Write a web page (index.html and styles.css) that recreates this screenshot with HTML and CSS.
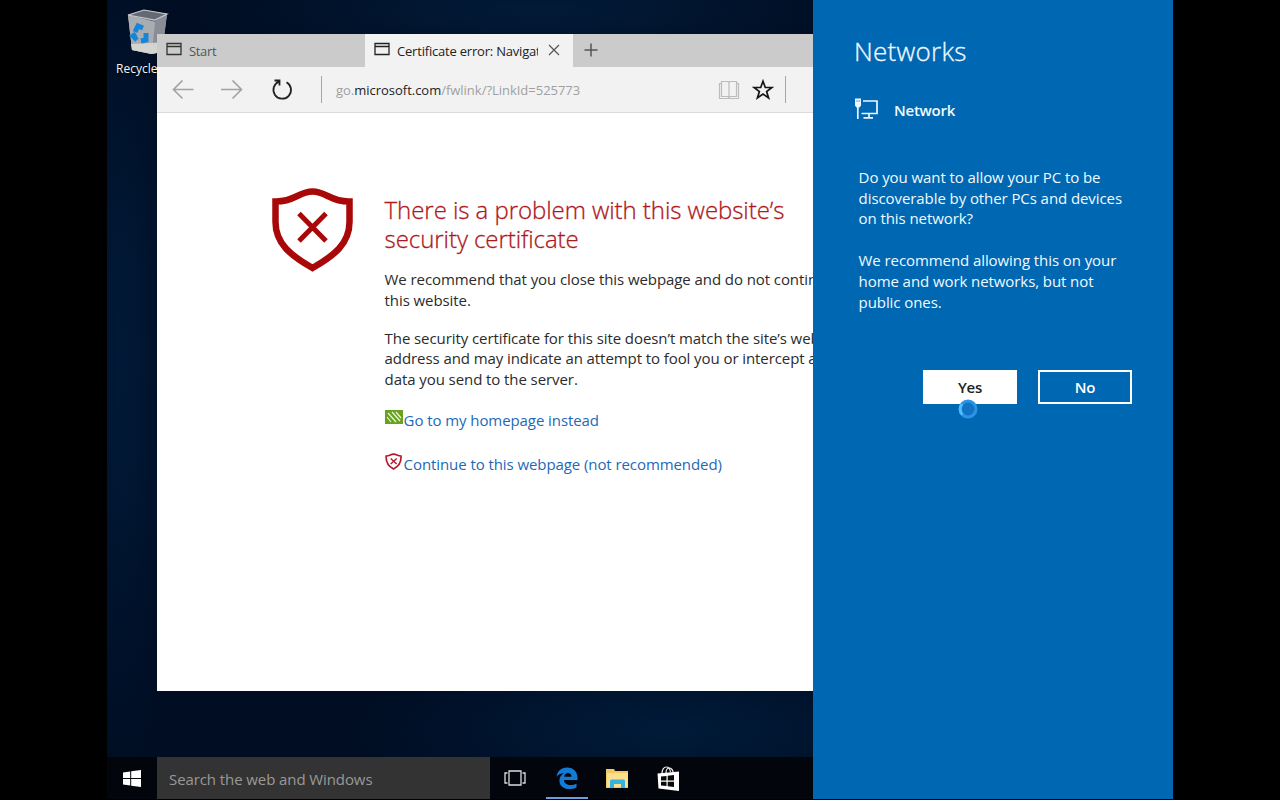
FILE: index.html
```html
<!DOCTYPE html>
<html lang="en">
<head>
<meta charset="utf-8">
<title>Desktop</title>
<link rel="stylesheet" href="styles.css">
</head>
<body>
<div class="desktop">
  <div class="recycle">
    <svg width="42" height="46" viewBox="0 0 42 46">
      <path d="M1 6 17 1 40 5 35 43 24 45 5 41z" fill="#a9adb3"/>
      <path d="M1 6 17 1 40 5 28 13z" fill="#646a73"/>
      <path d="M1 6 28 13 25 45 5 41z" fill="#a9acb1"/>
      <path d="M28 13 40 5 35 43 25 45z" fill="#898e96"/>
      <path d="M4 35 25 34 36 33 34 43 25 45 5 41z" fill="#d4d4d1"/>
      <path d="M1 6 17 1 40 5 28 11z" fill="none" stroke="#c5c9ce" stroke-width="1.2"/>
      <path d="M8 23 11 17 16 19M19 24 19 31 14 32M10 31 6 27 9 25" fill="none" stroke="#1685d8" stroke-width="5"/>
    </svg>
    <span class="recycle-label">Recycle Bin</span>
  </div>

  <main class="window">
    <div class="tabs">
      <div class="tab tab-start">
        <svg class="tab-icon" width="16" height="14" viewBox="0 0 16 14"><path d="M1 1.500h14v11H1zM1 4.500h14" fill="none" stroke="#333" stroke-width="1.300"/></svg>
        <span class="start-title">Start</span>
      </div>
      <div class="tab tab-active">
        <svg class="tab-icon" width="16" height="14" viewBox="0 0 16 14"><path d="M1 1.500h14v11H1zM1 4.500h14" fill="none" stroke="#222" stroke-width="1.300"/></svg>
        <span class="tab-title">Certificate error: Navigation blocked</span>
        <svg class="close" width="12" height="12" viewBox="0 0 12 12"><path d="M1 1l10 10M11 1 1 11" stroke="#555" stroke-width="1.200"/></svg>
      </div>
      <svg class="plus" width="14" height="14" viewBox="0 0 14 14"><path d="M7 .5v13M.5 7h13" stroke="#555" stroke-width="1.500"/></svg>
    </div>
    <div class="toolbar">
      <svg class="nav-back" width="22" height="20" viewBox="0 0 22 20"><path d="M21.500 9.500H2M10.500 .500 1.500 9.500l9 9" fill="none" stroke="#a2a2a2" stroke-width="1.600"/></svg>
      <svg class="nav-next" width="22" height="20" viewBox="0 0 22 20"><path d="M0 9.500h20.500M11.500 .500l9 9-9 9" fill="none" stroke="#a2a2a2" stroke-width="1.600"/></svg>
      <svg class="nav-reload" width="22" height="22" viewBox="0 0 22 22"><path d="M8 2.700A8.800 8.800 0 1 0 15.500 3.200M3.500 1.500H8.500V6.500" fill="none" stroke="#222" stroke-width="1.800"/></svg>
      <i class="rule"></i>
      <span class="url">go.<b>microsoft.com</b>/fwlink/?LinkId=525773</span>
      <svg class="book" width="22" height="20" viewBox="0 0 22 20"><path d="M3.500 1.500H10L11 2.500 12 1.500H18.500V16.500H12L11 17.500 10 16.500H3.500zM11 2.500V17.500M3.500 3.500H1.500V18.500H20.500V3.500H18.500" fill="none" stroke="#bcbcbc" stroke-width="1.200"/></svg>
      <svg class="star" width="22" height="22" viewBox="0 0 22 22"><path d="M11 2.200 13.300 8.500H19.900L14.600 12.500 16.600 19 11 15.100 5.400 19 7.400 12.500 2.100 8.500H8.700z" fill="none" stroke="#151515" stroke-width="1.700"/></svg>
      <i class="rule"></i>
    </div>
    <div class="page">
      <svg class="shield" width="82" height="86" viewBox="0 0 82 86"><path d="M3.500 14.500C22 15 27 4.500 40.500 4.500S59 15 77.500 14.500V35C77.500 57 61.500 69 40.500 81 19.500 69 3.500 57 3.500 35z" fill="none" stroke="#a90808" stroke-width="6.500"/><path d="M27 26.500 54 54M54 26.500 27 54" stroke="#a90808" stroke-width="5"/></svg>
      <div class="message">
        <h1>There is a problem with this website’s<br>security certificate</h1>
        <p class="first">We recommend that you close this webpage and do not continue to<br>this website.</p>
        <p class="second">The security certificate for this site doesn’t match the site’s web<br>address and may indicate an attempt to fool you or intercept any<br>data you send to the server.</p>
        <a class="link home"><svg width="18" height="14" viewBox="0 0 18 14"><path d="M0 0h18v14H0z" fill="#67a220"/><path d="M3 3 11 12M7 2 15 11M11 2 16 8M2 7 6 12" stroke="#eef6dc" stroke-width="1.200"/></svg><span>Go to my homepage instead</span></a>
        <a class="link cont"><svg width="18" height="17" viewBox="0 0 18 17"><path d="M1.200 3C5 3 5.500 1.200 8.500 1.200S12.500 3 16 3C16.500 10 13.500 13.500 8.500 16 3.500 13.500.7 10 1.200 3z" fill="none" stroke="#b21b2b" stroke-width="1.700"/><path d="M5.700 5.500l6 5.500M11.700 5.500 5.700 11" stroke="#b21b2b" stroke-width="1.400"/></svg><span>Continue to this webpage (not recommended)</span></a>
      </div>
    </div>
  </main>

  <footer class="taskbar">
    <div class="start-button"><svg width="18" height="17" viewBox="0 0 18 17"><path d="M0 2.400 7.200 1.400V8H0zM8.200 1.200 18 0V8H8.200zM0 9H7.200V15.600L0 14.600zM8.200 9H18V17L8.200 15.800z" fill="#fff"/></svg></div>
    <div class="search"><span>Search the web and Windows</span></div>
    <div class="task view"><svg width="22" height="16" viewBox="0 0 22 16"><path d="M5 1h12v14H5zM3.500 3H1v10h2.500M18.500 3H21v10h-2.500" fill="none" stroke="#ddd" stroke-width="1.300"/></svg></div>
    <div class="task edge"><svg width="22" height="22" viewBox="0 0 22 22"><path d="M.5 9.800C1.300 4.300 5.100.5 11 .5c6.700 0 10.500 4.700 10.500 10.400v2.200H8c.2 3.300 3 5 6.500 5 2.300 0 4.200-.6 6-1.700v4c-2 1.100-4.300 1.600-7 1.600C7.500 22 3.400 18.800 3.400 13.700c0-3.400 1.800-6 4.700-7.500C4.500 6.300 2.100 7.600.5 9.800zM8.100 9.700h7.400c0-2.500-1.200-3.800-3.500-3.800-2.100 0-3.500 1.300-3.900 3.800z" fill="#137bd6"/></svg></div>
    <div class="task files"><svg width="23" height="20" viewBox="0 0 23 20"><path d="M0 0h8l1 2h13v17H0z" fill="#efc965"/><path d="M1 4h21v14H1z" fill="#fbdf8c"/><path d="M4 19v-7q0-1.500 1.500-1.500h12q1.500 0 1.500 1.500v7h-4v-4H8v4z" fill="#35b3df"/></svg></div>
    <div class="task store"><svg width="23" height="25" viewBox="0 0 23 25"><path d="M5 8C5 3 7 1 9.500 1S13 3 13.500 6M9 7C9 3 11 2 12.500 2S16 4 16 6" fill="none" stroke="#eee" stroke-width="1.200"/><path d="M.5 7.500 22 5.500V25L1.500 22.500z" fill="#fff"/><path d="M4 10.500 9.500 10V14.500H4zM10.700 9.800 17 9V14.500H10.700zM4 15.700H9.500V20L4 19.500zM10.700 15.700H17V21L10.700 20.200z" fill="#0a0a0a"/></svg></div>
  </footer>

  <aside class="panel">
    <h2>Networks</h2>
    <div class="network">
      <svg width="24" height="22" viewBox="0 0 24 22"><path d="M8 3H22V15.500H6.500M14 15.500v4M8.500 19.800H18M2.800 7V21" fill="none" stroke="#eef8ff" stroke-width="1.700"/><path d="M0 .5h6v7L4.500 9.500H1.500L0 7.500z" fill="#eef8ff"/><path d="M2 2v2M4.200 2v2" stroke="#4488b8" stroke-width=".8"/></svg>
      <strong>Network</strong>
    </div>
    <p class="ask">Do you want to allow your PC to be<br>discoverable by other PCs and devices<br>on this network?</p>
    <p class="advice">We recommend allowing this on your<br>home and work networks, but not<br>public ones.</p>
    <div class="buttons">
      <button class="yes">Yes<svg class="busy" width="20" height="20" viewBox="0 0 20 20"><circle cx="10" cy="10" r="8" fill="#1273c5" stroke="#2b94e6" stroke-width="3"/><path d="M4.300 15.500A8 8 0 0 1 4 5" fill="none" stroke="#52bbff" stroke-width="3"/></svg></button>
      <button class="no">No</button>
    </div>
  </aside>
</div>
</body>
</html>
```

FILE: styles.css
```css
* { box-sizing: border-box; }
body { margin: 0; height: 800px; background: #000; display: flex; justify-content: center; overflow: hidden; font-family: "Open Sans", "Noto Sans", sans-serif; }
svg { display: block; flex: none; }
h1, h2, p { margin: 0; font-weight: 400; }
.desktop { position: relative; width: 1066px; height: 799px; overflow: hidden; display: flex; flex-direction: column; justify-content: flex-end;
  background: radial-gradient(ellipse 330px 90px at 560px 730px, #001b39, transparent), radial-gradient(ellipse 60px 440px at 15px 360px, #011a38, transparent), radial-gradient(ellipse 350px 60px at 430px 10px, #021b38, transparent), #000d22; }
.recycle { position: absolute; left: 9px; top: 9px; width: 70px; display: flex; flex-direction: column; }
.recycle svg { margin-left: 11px; }
.recycle-label { color: #f4f4f4; font-size: 12px; line-height: 18px; margin-top: 5px; white-space: nowrap; text-shadow: 1px 1px 2px #000; }

.window { position: absolute; left: 50px; top: 34px; width: 706px; height: 657px; background: #fff; display: flex; flex-direction: column; }
.tabs { height: 33px; background: #cbcbcb; display: flex; align-items: center; flex: none; }
.tab { height: 33px; display: flex; align-items: center; padding-left: 9px; font-size: 13px; white-space: nowrap; }
.tab-start { width: 208px; color: #555; }
.tab-icon { margin-bottom: 3px; }
.start-title { margin: 1px 0 0 7px; letter-spacing: -.35px; }
.tab-active { width: 208px; background: #f2f2f2; color: #222; }
.tab-title { width: 141px; overflow: hidden; margin: 1px 0 0 7px; letter-spacing: -.2px; }
.close { margin: 0 0 2px 10px; }
.plus { margin: 0 0 2px 11px; }
.toolbar { height: 46px; flex: none; background: #f2f2f2; border-bottom: 1px solid #dcdcdc; display: flex; align-items: center; padding-left: 15px; }
.nav-next { margin-left: 27px; }
.nav-reload { margin-left: 28px; }
.rule { width: 1px; height: 27px; background: #a5a5a5; flex: none; }
.nav-reload + .rule { margin-left: 28px; }
.url { width: 382px; margin-left: 14px; color: #a0a0a0; font-size: 13px; letter-spacing: -.02px; }
.url b { font-weight: 400; color: #222; }
.star { margin-left: 12px; }
.star + .rule { margin-left: 11px; }
.page { display: flex; padding: 74px 0 0 115px; }
.message { margin-left: 30.6px; padding-top: 8px; white-space: nowrap; color: #2b2b2b; font-size: 15px; line-height: 20.8px; letter-spacing: -.08px; }
h1 { color: #ad1821; font-weight: 300; font-size: 24px; line-height: 29px; letter-spacing: -.06px; -webkit-text-stroke: .3px #ad1821; }
.first { margin-top: 16px; }
.second { margin-top: 17px; }
.link { display: flex; color: #1d69b8; }
.home { margin-top: 20px; }
.cont { margin-top: 23px; }
.link svg { margin-right: 1px; }
.cont svg { margin-top: -1px; }

.taskbar { height: 42px; background: #02050b; display: flex; align-items: stretch; }
.start-button { width: 50px; display: flex; align-items: center; justify-content: center; }
.search { width: 333px; background: #333; color: #999; font-size: 15px; display: flex; align-items: center; padding: 1px 0 0 12px; letter-spacing: -.09px; }
.task { width: 51px; display: flex; align-items: center; justify-content: center; }
.view { width: 50px; }
.edge { width: 42px; margin: 0 4px 0 6px; border-bottom: 2px solid #6b9fdf; padding-top: 2px; }
.files { padding-top: 2px; }
.store { width: 50px; }

.panel { position: absolute; left: 706px; top: 0; width: 360px; height: 799px; background: #0067b3; color: #f1faff; padding: 33px 0 0 41px; font-size: 15px; line-height: 20.8px; letter-spacing: -.08px; white-space: nowrap; }
h2 { font-size: 26px; font-weight: 300; line-height: 36px; letter-spacing: .25px; -webkit-text-stroke: .3px #f1faff; }
.network { display: flex; margin-top: 28px; align-items: flex-start; }
.network svg { margin: 1px 0 0 1px; }
.network strong { margin: 3px 0 0 15px; font-weight: 600; letter-spacing: -.25px; }
.ask { margin: 46px 0 0 4.6px; }
.advice { margin: 21px 0 0 4.6px; }
.buttons { display: flex; gap: 21px; margin: 57px 0 0 69px; }
button { position: relative; width: 94px; height: 34px; padding: 0; border: 2px solid #fff; border-radius: 0; background: #fff; font: 600 15px "Open Sans", sans-serif; color: #222; letter-spacing: -.3px; }
.no { background: transparent; color: #fff; }
.busy { position: absolute; left: 33px; top: 27px; }
```
